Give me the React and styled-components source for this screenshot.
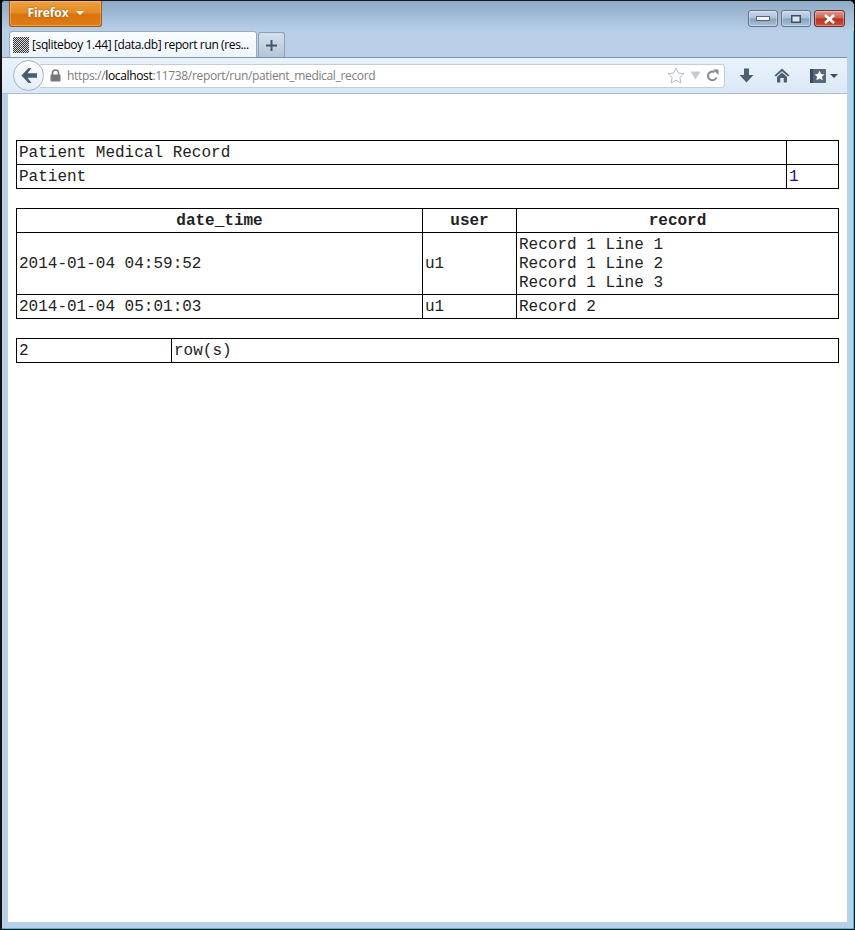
import React from "react";
import styled, { createGlobalStyle } from "styled-components";

const GlobalStyle = createGlobalStyle`
  html, body {
    margin: 0;
    padding: 0;
    background: #000;
  }
`;

const SWindow = styled.div`
  width: 855px;
  height: 930px;
  box-sizing: border-box;
  display: flex;
  flex-direction: column;
  overflow: hidden;
  border-top: 1px solid #1a1a1a;
  border-left: 2px solid #111;
  border-right: 1px solid #111;
  border-bottom: 1px solid #111;
  background: #b9d0e8;
  box-shadow: inset -1px -1px 0 #35c4e0;
  border-top-left-radius: 5px;
  border-top-right-radius: 6px;
`;

const STitleBar = styled.div`
  height: 30px;
  display: flex;
  justify-content: space-between;
  align-items: flex-start;
  padding: 0 9px 0 7px;
  background: linear-gradient(#8faac6, #a4bdd8 16px, #b8cfe8);
`;

const SFirefoxButton = styled.div`
  width: 93px;
  height: 26px;
  box-sizing: border-box;
  display: flex;
  align-items: center;
  justify-content: center;
  gap: 7px;
  padding-bottom: 2px;
  color: #fff;
  font: bold 12px "Open Sans", sans-serif;
  letter-spacing: -0.1px;
  background: linear-gradient(#f0a13f, #e58c25 45%, #d9730f 55%, #e07c14);
  border: 1px solid #9c5a14;
  border-top: 0;
  border-radius: 0 0 3px 3px;
  box-shadow: inset 0 0 0 1px rgba(255, 220, 170, 0.35);
  text-shadow: 0 0 2px #8a4c08;

  &::after {
    content: "";
    border: 4px solid transparent;
    border-top: 4px solid #fff;
    border-bottom: 0;
  }
`;

const SWindowButtons = styled.div`
  display: flex;
  gap: 3px;
  margin-top: 9px;
`;

const SWindowButton = styled.div`
  width: ${({ $wide }) => ($wide ? "31px" : "30px")};
  height: 17px;
  box-sizing: border-box;
  display: flex;
  align-items: center;
  justify-content: center;
  border: 1px solid ${({ $close }) => ($close ? "#6d2b2b" : "#5f7488")};
  border-radius: 3px;
  background: ${({ $close }) =>
    $close
      ? "linear-gradient(#dc9a8e, #c9604f 48%, #b5321f 52%, #c6543e)"
      : "linear-gradient(#c9d9ea, #a9c0d8 48%, #86a1bd 52%, #a9c2da)"};
  box-shadow: inset 0 0 0 1px rgba(255, 255, 255, 0.35);
`;

const STabStrip = styled.div`
  height: 26px;
  display: flex;
  padding-left: 7px;
  gap: 1px;
`;

const STab = styled.div`
  width: 248px;
  height: 26px;
  box-sizing: border-box;
  display: flex;
  align-items: center;
  gap: 3px;
  padding: 0 3px;
  background: linear-gradient(#fbfdff, #edf4fb);
  border: 1px solid #9aaabb;
  border-bottom: 0;
  border-radius: 3px 3px 0 0;
`;

const SFavicon = styled.div`
  width: 16px;
  height: 16px;
  flex: none;
  background: repeating-conic-gradient(#333 0 25%, #ddd 0 50%) 0 0 / 2px 2px;
`;

const STabTitle = styled.span`
  font: 12px "Open Sans", sans-serif;
  letter-spacing: -0.38px;
  color: #000;
  white-space: nowrap;
`;

const SNewTab = styled.div`
  width: 27px;
  height: 25px;
  margin-top: 1px;
  box-sizing: border-box;
  display: flex;
  align-items: center;
  justify-content: center;
  background: linear-gradient(#d5e0ec, #b4c6da);
  border: 1px solid #8ea0b3;
  border-bottom: 0;
  border-radius: 3px 3px 0 0;
`;

const SNavBar = styled.div`
  height: 37px;
  box-sizing: border-box;
  display: flex;
  align-items: center;
  padding: 0 8px 0 8px;
  margin-right: 7px;
  background: linear-gradient(#eaf3fc, #dce8f6);
  border-top: 1px solid #7f93a8;
  border-bottom: 1px solid #aabccd;
`;

const SBackButton = styled.div`
  width: 31px;
  height: 31px;
  flex: none;
  box-sizing: border-box;
  margin-left: 3px;
  position: relative;
  z-index: 1;
  display: flex;
  align-items: center;
  justify-content: center;
  border: 1px solid #a3b1c0;
  border-radius: 50%;
  background: linear-gradient(#fdfeff, #e4edf7);
`;

const SUrlBar = styled.div`
  width: 685px;
  height: 24px;
  margin-left: -4px;
  flex: none;
  box-sizing: border-box;
  display: flex;
  align-items: center;
  padding: 0 5px 0 10px;
  background: #fff;
  border: 1px solid #c2cedb;
  border-left: 0;
  border-radius: 0 3px 3px 0;
`;

const SUrl = styled.span`
  flex: 1;
  margin-left: 6px;
  font: 12px "Open Sans", sans-serif;
  letter-spacing: -0.34px;
  color: #7d7d7d;
  white-space: nowrap;

  b {
    font-weight: normal;
    color: #000;
  }
`;

const SUrlIcons = styled.div`
  display: flex;
  align-items: center;
  gap: 5px;
`;

const SNavIcons = styled.div`
  display: flex;
  align-items: center;
  margin-left: 14px;
  gap: 20px;
`;

const SBookmarks = styled.div`
  display: flex;
  align-items: center;
  gap: 4px;
`;

const SContent = styled.div`
  flex: 1;
  margin: 0 7px 7px 6px;
  padding: 46px 8px 0;
  background: #fff;
  display: flex;
  flex-direction: column;
  gap: 19px;
`;

const STable = styled.table`
  width: 823px;
  box-sizing: border-box;
  border-collapse: collapse;
  table-layout: fixed;
  font: 16px / 19px "Liberation Mono", "Courier New", monospace;
  color: #222;
`;

const SCell = styled.td`
  height: 23px;
  box-sizing: border-box;
  padding: 3px 2px 1px;
  border: 1px solid #000;
  white-space: pre-line;
  color: ${({ $link }) => ($link ? "#14147a" : "#222")};
`;

const SHead = styled.th`
  height: 23px;
  box-sizing: border-box;
  padding: 3px 2px 1px;
  border: 1px solid #000;
  font-weight: bold;
  text-align: center;
`;

const BackIcon = () => (
  <svg width="16" height="15" viewBox="0 0 16 15">
    <path d="M7.5 0 L0.5 7.5 L7.5 15 L10.5 15 L6.5 9.8 L16 9.8 L16 5.2 L6.5 5.2 L10.5 0 Z" fill="#4a5c70" />
  </svg>
);

const LockIcon = () => (
  <svg width="11" height="13" viewBox="0 0 11 13">
    <path d="M2.5 6 V4 a3 3 0 0 1 6 0 V6" fill="none" stroke="#777" strokeWidth="1.6" />
    <rect x="0.5" y="5.5" width="10" height="7" rx="1" fill="#777" />
  </svg>
);

const StarIcon = () => (
  <svg width="18" height="17" viewBox="0 0 18 17">
    <path
      d="M9 1 L11.4 6 L17 6.7 L12.9 10.5 L14 16 L9 13.3 L4 16 L5.1 10.5 L1 6.7 L6.6 6 Z"
      fill="#fbfbfb"
      stroke="#b5bcc4"
    />
  </svg>
);

const DropIcon = () => (
  <svg width="11" height="9" viewBox="0 0 11 9">
    <path d="M0.5 0.5 H10.5 L5.5 8.5 Z" fill="#c3ccd6" />
  </svg>
);

const ReloadIcon = () => (
  <svg width="13" height="13" viewBox="0 0 13 13">
    <path d="M10.5 8.5 A4.4 4.4 0 1 1 8.5 3" fill="none" stroke="#7f8b97" strokeWidth="2" />
    <path d="M7 0.5 L12.5 0.5 L12.5 6 Z" fill="#7f8b97" />
  </svg>
);

const DownloadIcon = () => (
  <svg width="15" height="15" viewBox="0 0 15 15">
    <path d="M5 0.5 H10 V7 H14.5 L7.5 14.5 L0.5 7 H5 Z" fill="#4d5f72" />
  </svg>
);

const HomeIcon = () => (
  <svg width="16" height="15" viewBox="0 0 16 15">
    <path d="M8 0.5 L15.5 7.5 L14 8.5 L8 3.2 L2 8.5 L0.5 7.5 Z" fill="#4d5f72" />
    <path d="M3 9 L8 4.6 L13 9 V14.5 H9.7 V10 H6.3 V14.5 H3 Z" fill="#4d5f72" />
  </svg>
);

const BookmarksIcon = () => (
  <svg width="16" height="14" viewBox="0 0 16 14">
    <rect width="16" height="14" rx="1" fill="#56687b" />
    <rect width="3" height="14" fill="#3c4c5d" />
    <path
      d="M9.5 1.8 L11 5 L14.4 5.4 L11.9 7.7 L12.6 11.2 L9.5 9.5 L6.4 11.2 L7.1 7.7 L4.6 5.4 L8 5 Z"
      fill="#fff"
    />
  </svg>
);

const Caret = () => (
  <svg width="8" height="4" viewBox="0 0 8 4">
    <path d="M0 0 H8 L4 4 Z" fill="#3c4a58" />
  </svg>
);

const App = () => (
  <SWindow>
    <GlobalStyle />
    <STitleBar>
      <SFirefoxButton>Firefox</SFirefoxButton>
      <SWindowButtons>
        <SWindowButton>
          <svg width="14" height="5" viewBox="0 0 14 5">
            <rect x="0.5" y="0.5" width="13" height="4" fill="#f4f6f8" stroke="#56677a" />
          </svg>
        </SWindowButton>
        <SWindowButton>
          <svg width="10" height="8" viewBox="0 0 10 8">
            <rect x="0.75" y="0.75" width="8.5" height="6.5" fill="#d8e3ee" stroke="#3e4f61" strokeWidth="1.5" />
          </svg>
        </SWindowButton>
        <SWindowButton $close $wide>
          <svg width="13" height="10" viewBox="0 0 13 10">
            <path d="M2 1 L11 9 M11 1 L2 9" stroke="#fff" strokeWidth="2.6" />
          </svg>
        </SWindowButton>
      </SWindowButtons>
    </STitleBar>
    <STabStrip>
      <STab>
        <SFavicon />
        <STabTitle>[sqliteboy 1.44] [data.db] report run (res...</STabTitle>
      </STab>
      <SNewTab>
        <svg width="11" height="11" viewBox="0 0 11 11">
          <path d="M5.5 0 V11 M0 5.5 H11" stroke="#46586b" strokeWidth="2" />
        </svg>
      </SNewTab>
    </STabStrip>
    <SNavBar>
      <SBackButton>
        <BackIcon />
      </SBackButton>
      <SUrlBar>
        <LockIcon />
        <SUrl>
          https://<b>localhost</b>:11738/report/run/patient_medical_record
        </SUrl>
        <SUrlIcons>
          <StarIcon />
          <DropIcon />
          <ReloadIcon />
        </SUrlIcons>
      </SUrlBar>
      <SNavIcons>
        <DownloadIcon />
        <HomeIcon />
        <SBookmarks>
          <BookmarksIcon />
          <Caret />
        </SBookmarks>
      </SNavIcons>
    </SNavBar>
    <SContent>
      <STable>
        <colgroup>
          <col width="770" />
          <col />
        </colgroup>
        <tbody>
          <tr>
            <SCell>Patient Medical Record</SCell>
            <SCell />
          </tr>
          <tr>
            <SCell>Patient</SCell>
            <SCell $link>1</SCell>
          </tr>
        </tbody>
      </STable>
      <STable>
        <colgroup>
          <col width="406" />
          <col width="94" />
          <col />
        </colgroup>
        <thead>
          <tr>
            <SHead>date_time</SHead>
            <SHead>user</SHead>
            <SHead>record</SHead>
          </tr>
        </thead>
        <tbody>
          <tr>
            <SCell>2014-01-04 04:59:52</SCell>
            <SCell>u1</SCell>
            <SCell>{"Record 1 Line 1\nRecord 1 Line 2\nRecord 1 Line 3"}</SCell>
          </tr>
          <tr>
            <SCell>2014-01-04 05:01:03</SCell>
            <SCell>u1</SCell>
            <SCell>Record 2</SCell>
          </tr>
        </tbody>
      </STable>
      <STable>
        <colgroup>
          <col width="155" />
          <col />
        </colgroup>
        <tbody>
          <tr>
            <SCell>2</SCell>
            <SCell>row(s)</SCell>
          </tr>
        </tbody>
      </STable>
    </SContent>
  </SWindow>
);

export default App;
